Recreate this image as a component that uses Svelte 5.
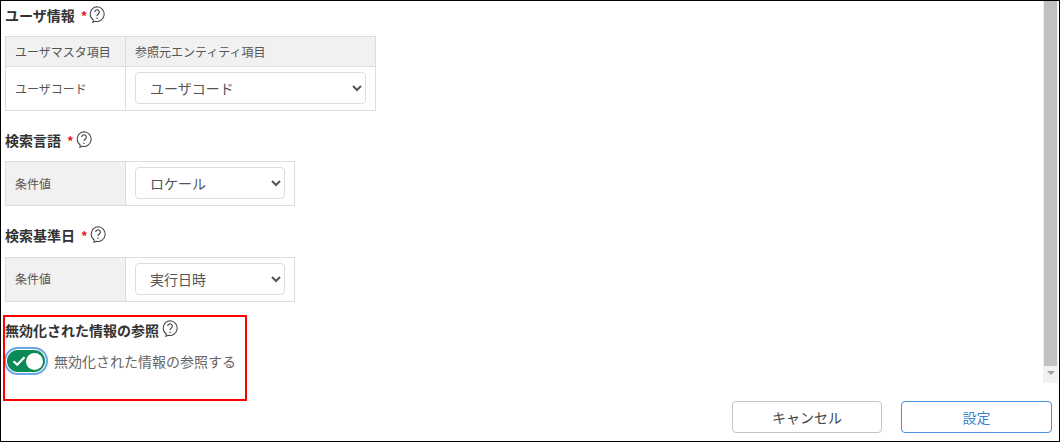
<script>
  let disabledRef = $state(true);

  const sections = [
    { title: "検索言語", value: "ロケール", required: true },
    { title: "検索基準日", value: "実行日時", required: true },
  ];
</script>

{#snippet help()}
  <svg class="help" viewBox="1 1 14 14.6" width="16" height="17" aria-hidden="true">
    <path d="M8 1.6a6.4 6.4 0 1 1-1.7 12.6l-1.9 1 .3-2.1A6.4 6.4 0 0 1 8 1.6z" fill="none" stroke="#444" stroke-width=".9"/>
    <path d="M6 6.2a2 2 0 1 1 3.2 1.6c-.8.6-1.2 1-1.2 1.9" fill="none" stroke="#444" stroke-width="1"/>
    <circle cx="8" cy="11.6" r=".65" fill="#444"/>
  </svg>
{/snippet}

<div class="frame">
  <div class="body">
    <div class="content">
      <h3 class="heading first">ユーザ情報<span class="req">*</span>{@render help()}</h3>
      <table class="wide">
        <tbody>
          <tr class="head">
            <td class="label-col">ユーザマスタ項目</td>
            <td>参照元エンティティ項目</td>
          </tr>
          <tr class="tall">
            <td class="label-col">ユーザコード</td>
            <td>
              <select class="sel-wide"><option>ユーザコード</option></select>
            </td>
          </tr>
        </tbody>
      </table>

      {#each sections as s}
        <h3 class="heading">{s.title}<span class="req">*</span>{@render help()}</h3>
        <table class="narrow">
          <tbody>
            <tr class="tall">
              <td class="label-col shaded">条件値</td>
              <td>
                <select class="sel-narrow"><option>{s.value}</option></select>
              </td>
            </tr>
          </tbody>
        </table>
      {/each}

      <h3 class="heading toggle-heading">無効化された情報の参照{@render help()}</h3>
      <label class="toggle-row">
        <input type="checkbox" bind:checked={disabledRef} />
        <span class="toggle">
          <svg viewBox="0 0 14 12" width="14" height="12" aria-hidden="true">
            <path d="M1.5 6.2 5.2 9.8 12.5 2.2" fill="none" stroke="#fff" stroke-width="2.2"/>
          </svg>
          <span class="knob"></span>
        </span>
        <span class="toggle-text">無効化された情報の参照する</span>
      </label>
    </div>
    <div class="scrollbar">
      <span class="thumb"></span>
      <span class="arrow"></span>
    </div>
  </div>

  <div class="footer">
    <button class="btn">キャンセル</button>
    <button class="btn primary">設定</button>
  </div>

  <div class="callout"></div>
</div>

<style>
  :global(body) {
    margin: 0;
    background: #fff;
  }

  .frame {
    position: relative;
    box-sizing: border-box;
    width: 1060px;
    height: 442px;
    border: 1px solid #000;
    display: flex;
    flex-direction: column;
    font-family: "Noto Sans CJK JP", "Noto Sans", sans-serif;
    color: #555;
    overflow: hidden;
  }

  .body {
    display: flex;
    height: 382px;
  }

  .content {
    flex: 1;
    padding-left: 4px;
    min-width: 0;
  }

  .heading {
    display: flex;
    align-items: center;
    margin: 19px 0 11.25px;
    height: 20px;
    font-size: 14px;
    font-weight: 700;
    color: #333;
    white-space: pre;
  }

  .heading.first {
    margin-top: 4px;
    margin-bottom: 11px;
  }

  .req {
    color: #e0201c;
    margin: 0 2px 0 6px;
    font-size: 13px;
  }

  .help {
    flex: none;
    margin-left: 3px;
    margin-top: -2px;
  }

  .req + .help {
    margin-left: 0;
  }

  table {
    border-collapse: collapse;
    table-layout: fixed;
    font-size: 12px;
  }

  td {
    border: 1px solid #ddd;
    padding: 0 0 0 9px;
  }

  .wide {
    width: 371px;
  }

  .narrow {
    width: 290px;
  }

  .label-col {
    width: 110px;
  }

  .head td {
    background: #f1f1f1;
    height: 29px;
  }

  .tall td {
    padding-top: 5px;
    padding-bottom: 6px;
  }

  .shaded {
    background: #f1f1f1;
  }

  select {
    display: block;
    height: 32px;
    box-sizing: border-box;
    border: 1px solid #ddd;
    border-radius: 4px;
    background: #fff;
    color: #555;
    font-family: inherit;
    font-size: 14px;
    padding-left: 10px;
  }

  .sel-wide {
    width: 231px;
  }

  .sel-narrow {
    width: 150px;
  }

  .toggle-heading {
    margin-top: 18px;
    margin-bottom: 8.5px;
  }

  .toggle-row {
    display: flex;
    align-items: center;
    gap: 7px;
  }

  .toggle-row input {
    position: absolute;
    opacity: 0;
  }

  .toggle {
    display: flex;
    align-items: center;
    justify-content: space-between;
    box-sizing: border-box;
    width: 38px;
    height: 22px;
    margin: 2px;
    padding: 0 2px 0 5px;
    border-radius: 11px;
    background: #0a8a55;
    box-shadow: 0 0 0 1px #fff, 0 0 0 3px #6aa5e8;
  }

  .knob {
    width: 17px;
    height: 17px;
    border-radius: 50%;
    background: #fff;
  }

  .toggle-text {
    font-size: 14px;
    color: #666;
  }

  .scrollbar {
    width: 15px;
    margin-right: 1px;
    background: #f1f1f1;
    display: flex;
    flex-direction: column;
    align-items: center;
  }

  .thumb {
    display: block;
    width: 13px;
    height: 365px;
    background: #c1c1c1;
  }

  .arrow {
    flex: none;
    width: 0;
    height: 0;
    margin-top: 5px;
    border-left: 4px solid transparent;
    border-right: 4px solid transparent;
    border-top: 4px solid #a0a0a0;
  }

  .footer {
    flex: 1;
    display: flex;
    justify-content: flex-end;
    gap: 19px;
    padding: 18px 7px 0 0;
  }

  .btn {
    box-sizing: border-box;
    width: 150px;
    height: 32px;
    background: #fff;
    border: 1px solid #c4c4c4;
    border-radius: 4px;
    color: #444;
    font-family: inherit;
    font-size: 14px;
  }

  .btn.primary {
    width: 151px;
    border-color: #4a90e2;
    color: #3b7fd0;
  }

  .callout {
    position: absolute;
    left: 2px;
    top: 314px;
    width: 244px;
    height: 86px;
    box-sizing: border-box;
    border: 2px solid #f00;
    pointer-events: none;
  }
</style>
